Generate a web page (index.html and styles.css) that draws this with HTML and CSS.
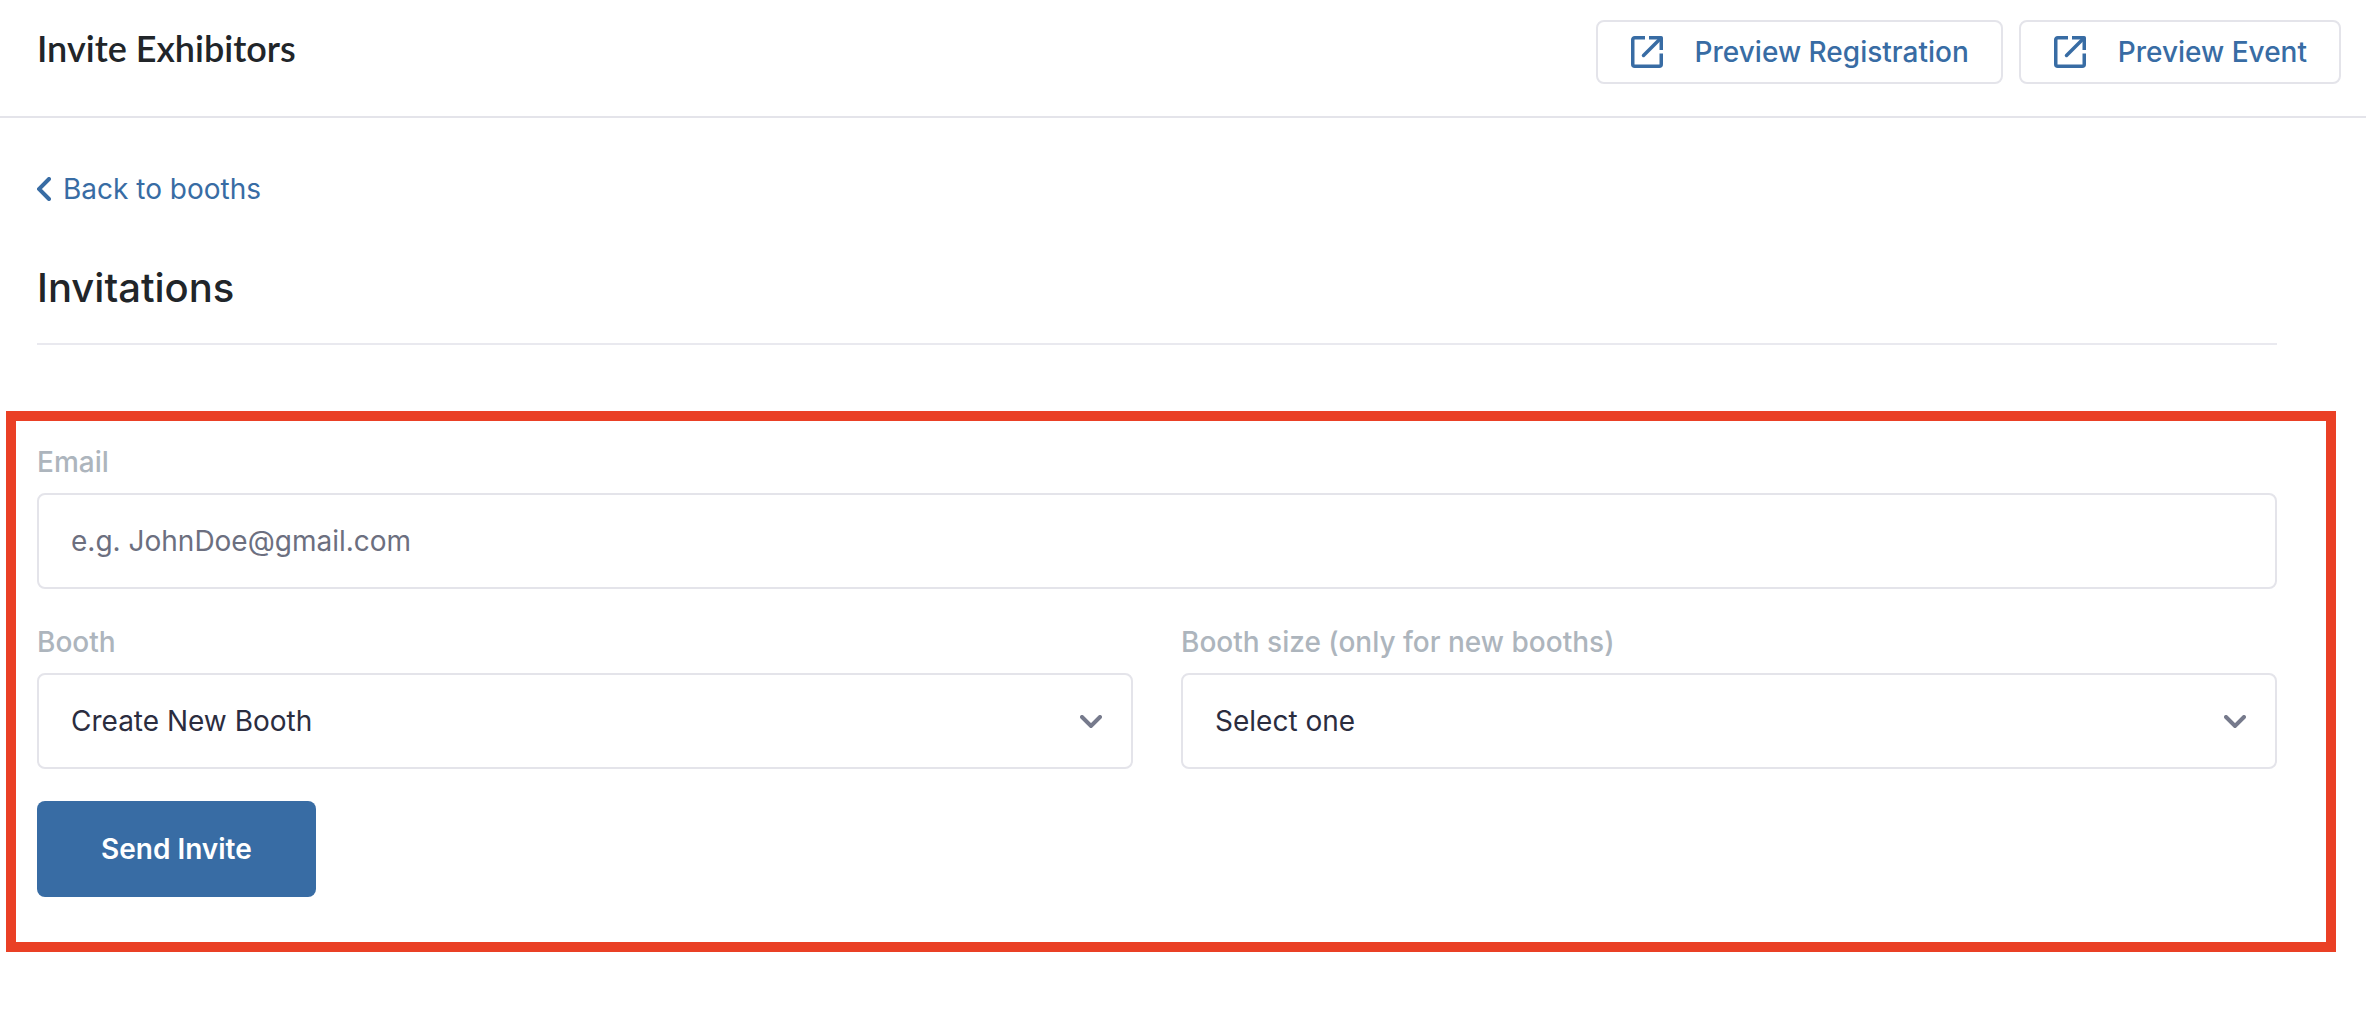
FILE: index.html
```html
<!DOCTYPE html>
<html lang="en">
<head>
<meta charset="utf-8">
<meta name="viewport" content="width=device-width, initial-scale=1">
<title>Invite Exhibitors</title>
<link rel="stylesheet" href="styles.css">
</head>
<body>
<svg class="sprite" aria-hidden="true">
  <symbol id="icon-open" viewBox="0 0 32 32">
    <path d="M14 1.750H3.750a2 2 0 0 0-2 2v24.500a2 2 0 0 0 2 2h24.500a2 2 0 0 0 2-2V17.500" />
    <path d="M18 1.750h12.250V14" stroke-linejoin="round" />
    <path d="M29 3 12.500 19.500" stroke-linecap="round" />
  </symbol>
</svg>
<header class="topbar">
  <h1 class="topbar-title">Invite Exhibitors</h1>
  <div class="topbar-actions">
    <button class="preview" type="button"><svg class="preview-icon" aria-hidden="true"><use href="#icon-open" /></svg>Preview Registration</button>
    <button class="preview" type="button"><svg class="preview-icon" aria-hidden="true"><use href="#icon-open" /></svg>Preview Event</button>
  </div>
</header>
<main>
  <div class="intro">
    <a class="back" href="#booths"><svg class="back-icon" viewBox="0 0 14 24" aria-hidden="true"><path d="M12 2 2 12l10 10" /></svg>Back to booths</a>
    <h2 class="section-title">Invitations</h2>
  </div>
  <form class="invite">
    <div class="field wide">
      <label for="email">Email</label>
      <input class="control" id="email" type="email" placeholder="e.g. JohnDoe@gmail.com">
    </div>
    <div class="field">
      <label for="booth">Booth</label>
      <div class="select">
        <select class="control" id="booth"><option>Create New Booth</option></select>
        <svg class="chevron" viewBox="0 0 22 13" aria-hidden="true"><path d="m2 2 9 9 9-9" /></svg>
      </div>
    </div>
    <div class="field">
      <label for="size">Booth size (only for new booths)</label>
      <div class="select">
        <select class="control" id="size"><option>Select one</option></select>
        <svg class="chevron" viewBox="0 0 22 13" aria-hidden="true"><path d="m2 2 9 9 9-9" /></svg>
      </div>
    </div>
    <button class="send" type="submit">Send Invite</button>
  </form>
</main>
</body>
</html>
```
FILE: styles.css
```css
* {
  box-sizing: border-box;
}

body {
  margin: 0;
  background: #fff;
  color: #212529;
  font-family: Inter, "Liberation Sans", sans-serif;
  font-size: 28px;
  line-height: 40px;
}

button,
input,
select {
  font: inherit;
}

.sprite {
  display: none;
}

.topbar {
  display: flex;
  align-items: flex-start;
  justify-content: space-between;
  padding: 20px 25px 32px 37px;
  border-bottom: 2px solid #e4e4ea;
}

.topbar-title {
  margin: 8px 0;
  font-family: Lato, "Liberation Sans", sans-serif;
  font-size: 36px;
  font-weight: 600;
  line-height: 40px;
}

.topbar-actions {
  display: flex;
  gap: 16px;
}

.preview {
  display: flex;
  align-items: center;
  gap: 32px;
  height: 64px;
  padding: 0 32px 0 33px;
  border: 2px solid #e4e4ea;
  border-radius: 8px;
  background: #fff;
  color: #386ca4;
  font-weight: 500;
}

.preview-icon {
  width: 32px;
  height: 32px;
  fill: none;
  stroke: #386ca4;
  stroke-width: 3.5;
}

.intro {
  display: flex;
  flex-direction: column;
  align-items: flex-start;
  margin: 0 89px 0 37px;
  padding-top: 51px;
  border-bottom: 2px solid #e9e9ef;
}

.back {
  display: flex;
  align-items: center;
  gap: 12px;
  color: #386ca4;
  text-decoration: none;
}

.back-icon {
  width: 14px;
  height: 24px;
  fill: none;
  stroke: #386ca4;
  stroke-width: 4;
  stroke-linecap: round;
}

.section-title {
  margin: 55px 0 31px;
  font-size: 40px;
  font-weight: 500;
  line-height: 48px;
}

.invite {
  display: grid;
  grid-template-columns: 1fr 1fr;
  gap: 32px 48px;
  margin: 66px 30px 0 6px;
  padding: 20px 49px 45px 21px;
  border: 10px solid #ea4025;
}

.field {
  display: flex;
  flex-direction: column;
  gap: 10px;
}

.wide {
  grid-column: 1 / -1;
}

.field label {
  color: #adb5bd;
  font-weight: 500;
  line-height: 42px;
}

.control {
  width: 100%;
  height: 96px;
  padding: 0 32px;
  border: 2px solid #e4e4ea;
  border-radius: 8px;
  background: #fff;
  color: #2b2d3f;
  appearance: none;
}

.control::placeholder {
  color: #6c6f7f;
  opacity: 1;
}

.select {
  display: grid;
  align-items: center;
}

.select > * {
  grid-area: 1 / 1;
}

.chevron {
  justify-self: end;
  width: 22px;
  height: 13px;
  margin-right: 31px;
  fill: none;
  stroke: #767a8c;
  stroke-width: 4;
  stroke-linecap: round;
  pointer-events: none;
}

.send {
  justify-self: start;
  height: 96px;
  padding: 0 64px;
  border: 0;
  border-radius: 8px;
  background: #386ca4;
  color: #fff;
  font-weight: 600;
}
```
